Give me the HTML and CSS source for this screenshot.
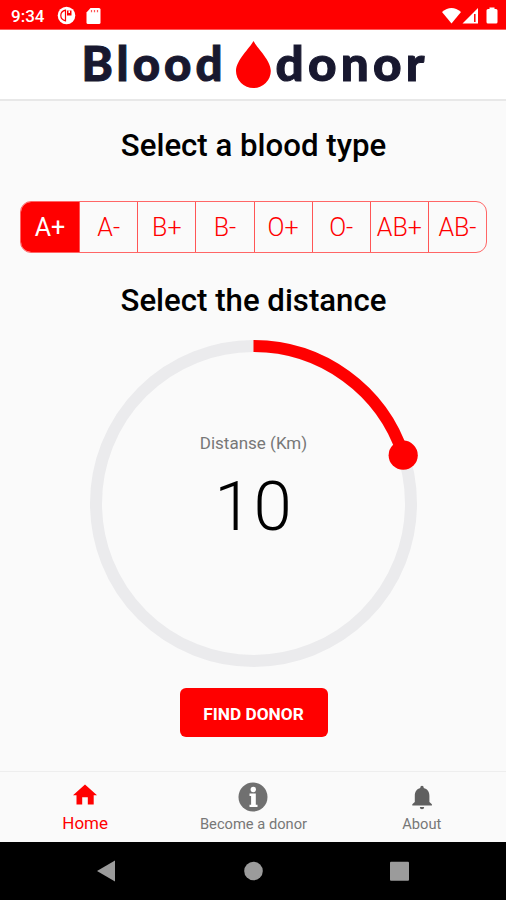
FILE: index.html
```html
<!DOCTYPE html>
<html lang="en">
<head>
<meta charset="utf-8">
<title>Blood donor</title>
<link rel="stylesheet" href="styles.css">
</head>
<body>
<div class="app">
  <div class="status">
    <span class="time">9:34</span>
    <svg class="status-left" width="46" height="20" viewBox="0 0 46 20">
      <circle cx="9.500" cy="9.500" r="8.800" fill="#fff"/>
      <path d="M8.500 4.200C5 5 3.800 7 3.800 9.500s1.200 4.500 4.700 5.300z" fill="none" stroke="#f00" stroke-width="1.200"/>
      <path d="M10 4.500h4.500v5H10z" fill="#f00"/><path d="M11.500 4.500h1.500v2.500h-1.500z" fill="#fff"/>
      <path d="M33.500 2H42a1.500 1.500 0 0 1 1.500 1.500v13A1.500 1.500 0 0 1 42 18H31a1.500 1.500 0 0 1-1.500-1.500V6.500z" fill="#fff"/>
      <path d="M34.500 4v2.200M37.500 4v2.200M40.500 4v2.200" stroke="#f55" stroke-width="1.200"/>
    </svg>
    <svg class="status-right" width="58" height="20" viewBox="0 0 58 20">
      <path d="M1 6Q10.500-2 20 6L10.500 17.500z" fill="#fff"/>
      <path d="M37 2V17.500H21.500z" fill="#fff"/>
      <path d="M33.800 8v8" stroke="#f00" stroke-width="1.500"/>
      <path d="M48.500 1.500h5V3H55a1.500 1.500 0 0 1 1.500 1.500V16a1.500 1.500 0 0 1-1.500 1.500h-8a1.500 1.500 0 0 1-1.500-1.500V4.500A1.500 1.500 0 0 1 47 3h1.500z" fill="#fff"/>
    </svg>
  </div>
  <header class="header">
    <svg width="350" height="60" viewBox="78 34 350 60">
      <text class="logo" x="81.500" y="81" textLength="145" lengthAdjust="spacingAndGlyphs">Blood</text>
      <path d="M253.500 41C257 48 270.800 60 270.800 71A17.300 17 0 0 1 236 71C236 60 250 48 253.500 41z" fill="#f00"/>
      <text class="logo" x="275.500" y="81" textLength="153" lengthAdjust="spacingAndGlyphs">donor</text>
    </svg>
  </header>
  <main class="main">
    <h1 class="heading">Select a blood type</h1>
    <div class="types">
      <span class="type active">A+</span><span class="type">A-</span><span class="type">B+</span><span class="type">B-</span><span class="type">O+</span><span class="type">O-</span><span class="type">AB+</span><span class="type">AB-</span>
    </div>
    <h2 class="heading second">Select the distance</h2>
    <div class="dial">
      <svg class="ring" width="328" height="328" viewBox="0 0 328 328">
        <circle cx="163.500" cy="163.500" r="157.500" fill="none" stroke="#ebebed" stroke-width="12"/>
        <path d="M163.500 6A157.500 157.500 0 0 1 313.300 114.800" fill="none" stroke="#f00" stroke-width="12"/>
        <circle cx="313.200" cy="115.200" r="14.600" fill="#f00"/>
      </svg>
      <div class="readout">
        <span class="unit">Distanse (Km)</span>
        <span class="value">10</span>
      </div>
    </div>
    <button class="find">FIND DONOR</button>
  </main>
  <nav class="tabs">
    <div class="tab home">
      <svg width="30" height="30" viewBox="0 0 30 30"><path d="M15 2.500L27 13.300H23.700V22.500H17.800V15.300H12.200V22.500H6.500V13.300H3z" fill="#f00"/></svg>
      <span>Home</span>
    </div>
    <div class="tab">
      <svg width="30" height="30" viewBox="0 0 30 30"><circle cx="15" cy="15" r="14.500" fill="#707070"/><circle cx="15.300" cy="7.500" r="2.700" fill="#fff"/><path d="M11.500 11.500h6.300v11.200h1.700v2.300h-8v-2.300h1.600v-8.700h-1.600z" fill="#fff"/></svg>
      <span>Become a donor</span>
    </div>
    <div class="tab">
      <svg width="30" height="30" viewBox="0 0 30 30"><path d="M15 3.700a1.700 1.700 0 0 1 1.700 1.700v.7c3.700.8 5.700 4 5.700 7.700v6.200l2.500 2.300v1.300H5.300v-1.300l2.500-2.300v-6.200c0-3.700 2-6.900 5.500-7.700v-.7A1.700 1.700 0 0 1 15 3.700zM12.800 25h4.400a2.200 2.200 0 0 1-4.400 0z" fill="#606060"/></svg>
      <span>About</span>
    </div>
  </nav>
  <div class="sysbar">
    <svg width="506" height="58" viewBox="0 842 506 58"><path d="M115 860.500V881.500L97 871z" fill="#9b9b9b"/><circle cx="253.500" cy="871" r="9.300" fill="#9b9b9b"/><rect x="390" y="861.800" width="19" height="19" rx="1" fill="#9b9b9b"/></svg>
  </div>
</div>
</body>
</html>
```
FILE: styles.css
```css
* { box-sizing: border-box; }
body { margin: 0; font-family: Roboto, sans-serif; background: #fafafa; }
.app { width: 506px; height: 900px; display: flex; flex-direction: column; overflow: hidden; }
.status { height: 30px; flex: none; display: flex; align-items: center; background: #f00; color: #fff; padding: 2px 7px 0 11px; border-bottom: 1px solid #ff5b5b; }
.time { font-size: 17px; font-weight: 500; width: 46px; line-height: 20px; }
.status-right { margin-left: auto; }
.header { height: 71px; flex: none; background: #fff; border-bottom: 2px solid #e8e8e8; padding: 4px 0 0 78px; }
.header svg { display: block; overflow: visible; }
.logo { font-family: Lato, sans-serif; font-size: 47px; font-weight: 900; letter-spacing: 4px; fill: #18182f; stroke: #18182f; stroke-width: 1; }
.main { flex: 1; display: flex; flex-direction: column; align-items: center; padding-left: 1px; }
.heading { margin: 25px 0 0; height: 40px; line-height: 40px; font-size: 31.2px; font-weight: 500; color: #000; white-space: nowrap; }
.types { width: 467px; height: 52px; margin-top: 35px; display: grid; grid-template-columns: repeat(8, 1fr); border: 1px solid #f66; border-radius: 11px; overflow: hidden; }
.type { display: flex; align-items: center; justify-content: center; font-size: 25px; color: #f00; font-weight: 300; border-left: 1px solid #f55; white-space: nowrap; padding-top: 1px; }
.type.active { background: #f00; color: #fff; font-weight: 400; border-left: 0; }
.heading.second { margin-top: 28px; }
.dial { width: 328px; height: 328px; margin-top: 19px; display: grid; flex: none; }
.ring, .readout { grid-area: 1 / 1; }
.readout { display: flex; flex-direction: column; align-items: center; padding-top: 93px; }
.unit { font-size: 17px; line-height: 20px; color: #777; }
.value { font-size: 69px; line-height: 80px; margin-top: 14px; font-weight: 300; letter-spacing: 1px; }
.find { width: 148px; height: 49px; margin-top: 20px; border: 0; border-radius: 6px; background: #f00; color: #fff; font: 700 17.3px Roboto, sans-serif; padding: 2px 0 0; }
.tabs { height: 71px; flex: none; display: grid; grid-template-columns: repeat(3, 1fr); border-top: 1px solid #eee; padding-left: 1px; }
.tab { display: flex; flex-direction: column; align-items: center; padding-top: 10px; font-size: 14.7px; color: #777; }
.tab span { line-height: 20px; margin-top: 2px; }
.tab.home { color: #f00; font-size: 17px; }
.tab.home span { margin-top: 1px; }
.sysbar { height: 58px; flex: none; background: #000; }
.sysbar svg { display: block; }
```
